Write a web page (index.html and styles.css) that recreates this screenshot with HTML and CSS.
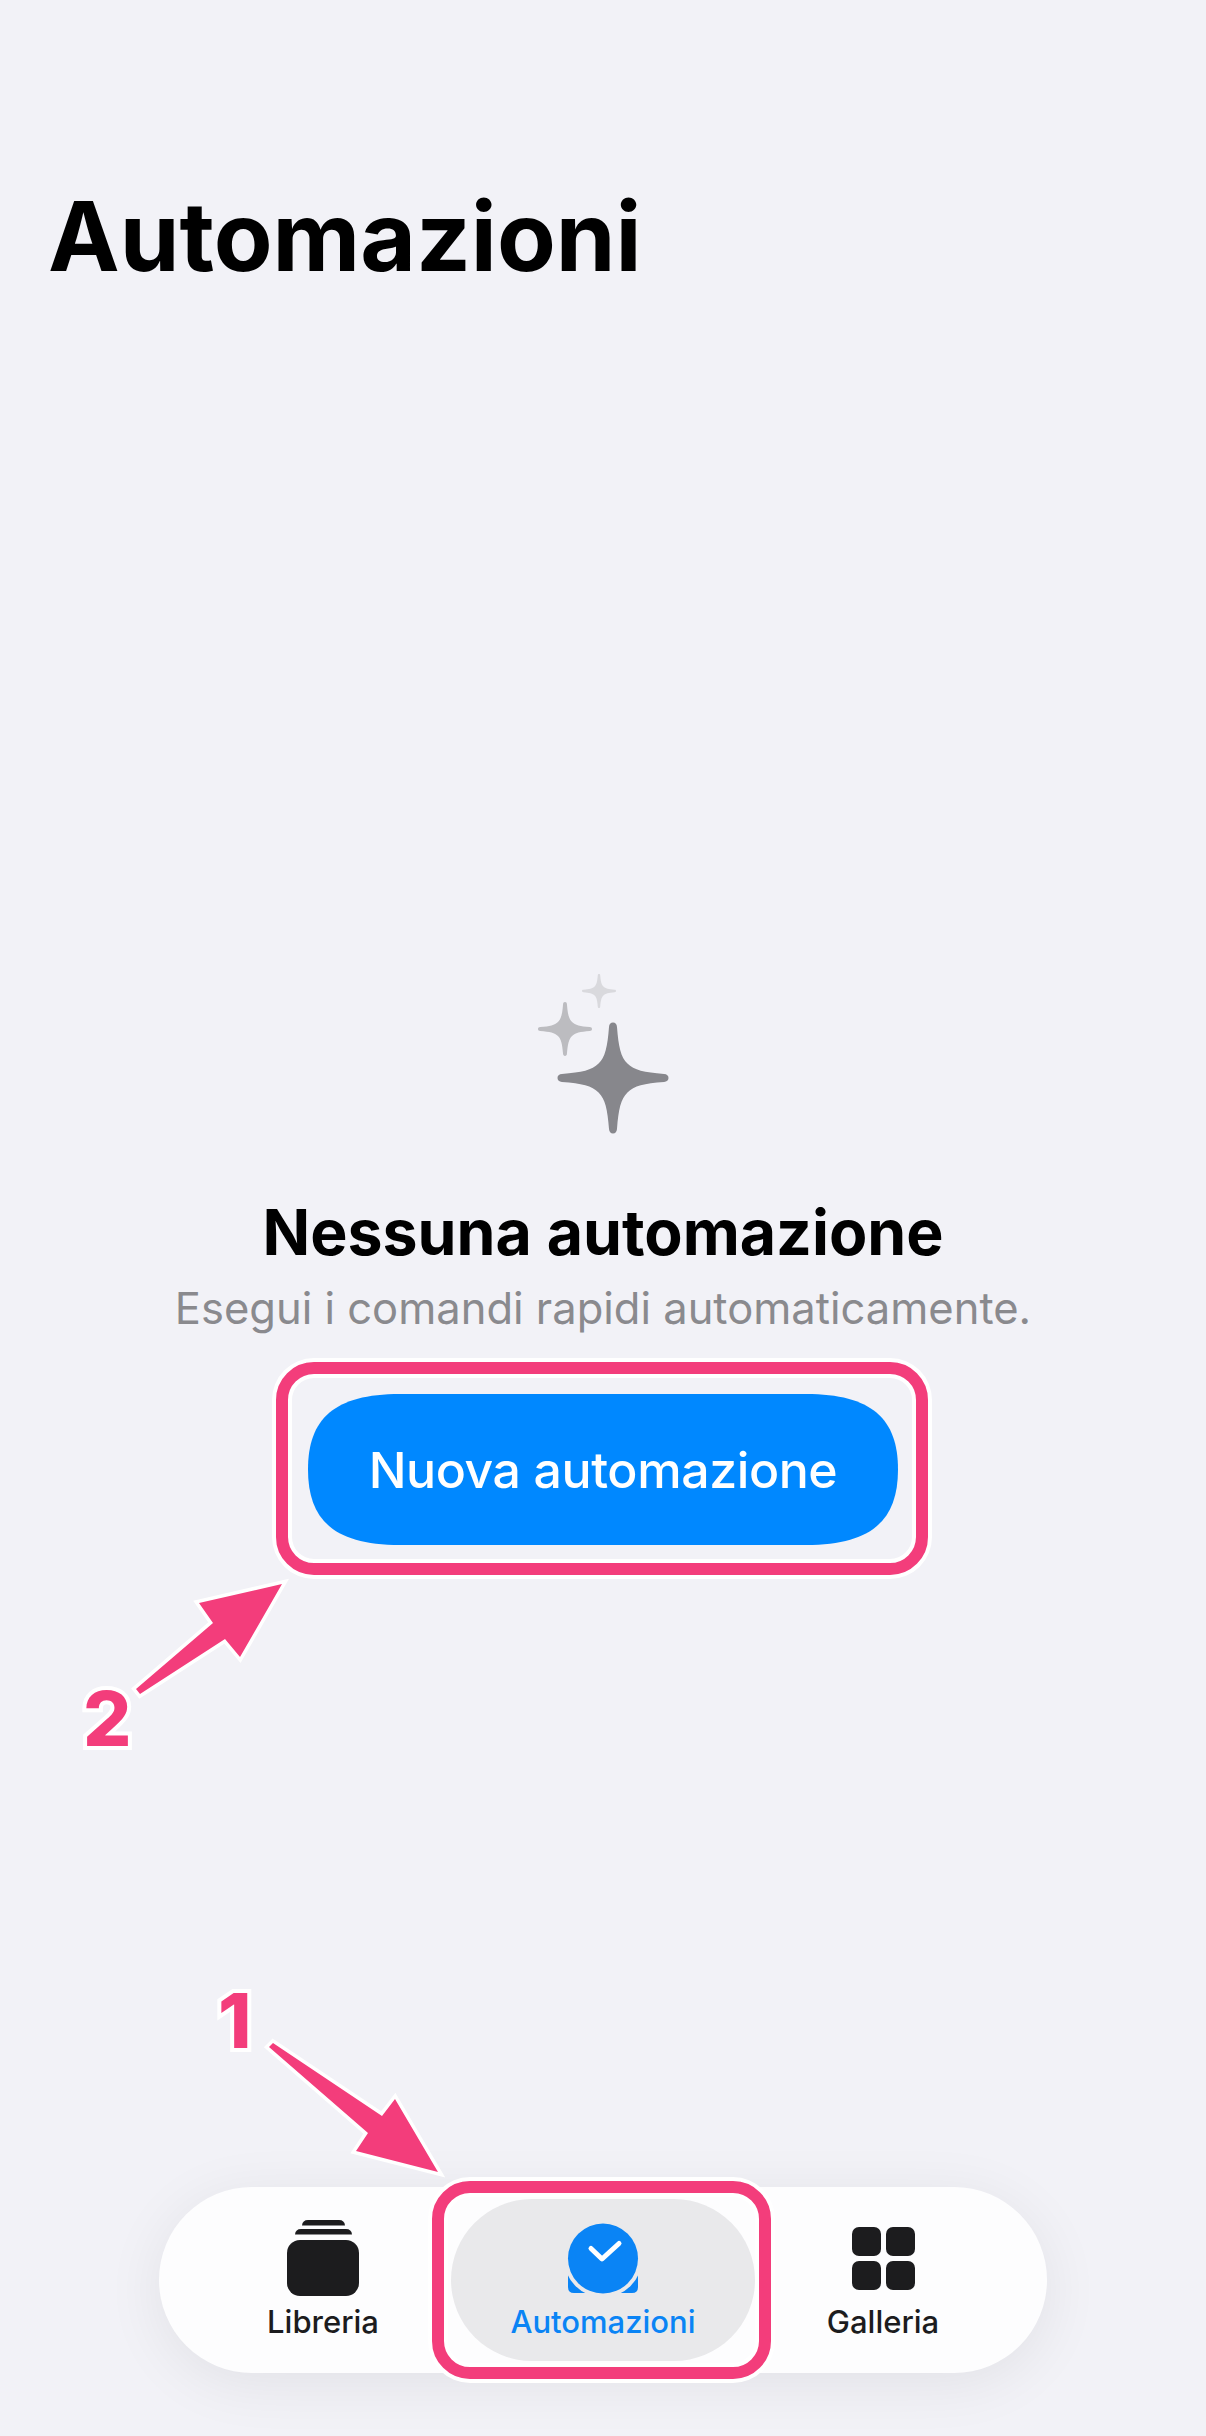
FILE: index.html
```html
<!DOCTYPE html>
<html lang="it">
<head>
  <meta charset="UTF-8">
  <meta name="viewport" content="width=device-width, initial-scale=1.0">
  <title>Automazioni</title>
  <link rel="stylesheet" href="styles.css">
</head>
<body>
  <h1 class="page-title">Automazioni</h1>

  <main class="empty-state">
    <svg class="sparkles" viewBox="0 0 140 160" aria-hidden="true">
      <defs>
        <path id="sparkle" d="M0 -50C2.2 -50 3.4 -48.5 3.6 -46C5 -28 7 -19 13 -13C19 -7 28 -5 46 -3.6C48.5 -3.4 50 -2.2 50 0C50 2.2 48.5 3.4 46 3.6C28 5 19 7 13 13C7 19 5 28 3.6 46C3.4 48.5 2.2 50 0 50C-2.2 50 -3.4 48.5 -3.6 46C-5 28 -7 19 -13 13C-19 7 -28 5 -46 3.6C-48.5 3.4 -50 2.2 -50 0C-50 -2.2 -48.5 -3.4 -46 -3.6C-28 -5 -19 -7 -13 -13C-7 -19 -5 -28 -3.6 -46C-3.4 -48.5 -2.2 -50 0 -50Z"/>
      </defs>
      <use href="#sparkle" transform="translate(66 17) scale(.34)" fill="#d9d9dd"/>
      <use href="#sparkle" transform="translate(32 55) scale(.54)" fill="#bcbcc0"/>
      <use href="#sparkle" transform="translate(80 104) scale(1.11)" fill="#87878c"/>
    </svg>
    <h2 class="empty-title">Nessuna automazione</h2>
    <p class="empty-text">Esegui i comandi rapidi automaticamente.</p>
    <button class="primary-btn">Nuova automazione</button>
  </main>

  <nav class="tab-bar">
    <a class="tab">
      <svg class="tab-icon" viewBox="0 0 72 76" aria-hidden="true">
        <path d="M15 5.500Q15.500 0 21 0H52Q57.500 0 58 5.500Z"/>
        <path d="M8 14.500Q8.500 9 14 9H59Q64.500 9 65 14.500Z"/>
        <rect x="0" y="20" width="72" height="56" rx="13"/>
      </svg>
      <span>Libreria</span>
    </a>
    <a class="tab tab-active">
      <svg class="tab-icon" viewBox="0 0 72 76" aria-hidden="true">
        <path d="M1 50V67Q1 73 7 73H65Q71 73 71 67V50Q71 46 66 46H6Q1 46 1 50Z"/>
        <circle cx="36" cy="38.500" r="39" fill="#e9e9eb"/>
        <circle cx="36" cy="38.500" r="35"/>
        <path class="tab-check" d="M24 28.500L35 39L52 23.500"/>
      </svg>
      <span>Automazioni</span>
    </a>
    <a class="tab">
      <div class="gallery-icon"><i></i><i></i><i></i><i></i></div>
      <span>Galleria</span>
    </a>
  </nav>

  <!-- callouts drawn on top of the screen -->
  <div class="callout-box callout-btn"></div>
  <div class="callout-box callout-tab"></div>
  <svg class="callout-arrows" viewBox="0 0 1206 2436" aria-hidden="true">
    <polygon points="269,2047 273,2043 382,2116 395,2099 438,2172 356,2151 368,2133"/>
    <polygon points="282,1584 199,1603 213,1623 136,1689 140,1694 225,1639 240,1657"/>
  </svg>
  <span class="callout-num num-one">1</span>
  <span class="callout-num num-two">2</span>
</body>
</html>
```

FILE: styles.css
```css
* {
  box-sizing: border-box;
}
body {
  position: relative;
  display: flex;
  flex-direction: column;
  height: 2436px;
  margin: 0;
  overflow: hidden;
  background: #f2f2f7;
  color: #000;
  font-family: Inter, "Liberation Sans", sans-serif;
}
.page-title {
  margin: 0;
  padding: 176px 48px 0;
  font-size: 96px;
  font-weight: 700;
  line-height: 120px;
}

/* empty state */
.empty-state {
  display: flex;
  flex-direction: column;
  align-items: center;
  margin-top: 678px;
}
.sparkles {
  display: block;
  width: 140px;
  height: 160px;
}
.empty-title {
  margin: 61px 0 0;
  font-size: 62.6px;
  font-weight: 700;
  line-height: 74px;
}
.empty-text {
  margin: 13px 0 0;
  color: #8a8a8e;
  font-size: 43.5px;
  line-height: 52px;
}
/* continuous-corner capsule, fixed 590x151 */
.primary-btn {
  width: 590px;
  height: 151px;
  margin-top: 60px;
  border: 0;
  background: #0088ff;
  clip-path: path("M0 75.500C0 25 26 0 92 0H498C564 0 590 25 590 75.500C590 126 564 151 498 151H92C26 151 0 126 0 75.500Z");
  color: #fff;
  font-family: inherit;
  font-size: 50px;
  font-weight: 550;
  letter-spacing: -0.4px;
}

/* tab bar */
.tab-bar {
  display: grid;
  grid-template-columns: repeat(3, 280px);
  align-self: center;
  width: 888px;
  height: 186px;
  margin-top: auto;
  margin-bottom: 63px;
  padding: 12px 24px;
  border-radius: 93px;
  background: #fdfdfe;
  box-shadow: 0 10px 60px rgba(0, 0, 0, 0.07);
}
.tab {
  display: flex;
  flex-direction: column;
  align-items: center;
  padding-top: 21px;
  color: #1c1c1e;
  font-size: 31px;
  font-weight: 500;
  line-height: 36px;
}
.tab span {
  margin-top: 8px;
}
.tab-icon {
  display: block;
  width: 72px;
  height: 76px;
  fill: currentColor;
}
.tab-active {
  margin: 0 -12px;
  border-radius: 81px;
  background: #e9e9eb;
  color: #0a84f5;
  font-weight: 550;
}
.tab-check {
  fill: none;
  stroke: #fff;
  stroke-width: 5;
  stroke-linecap: round;
  stroke-linejoin: round;
}
.gallery-icon {
  display: grid;
  grid-template-columns: 29px 29px;
  grid-auto-rows: 29px;
  gap: 5px;
  height: 76px;
  padding-top: 7px;
}
.gallery-icon i {
  border-radius: 7px;
  background: #1c1c1e;
}

/* callouts */
.callout-box {
  position: absolute;
  border: 12px solid #f33d7b;
  border-radius: 38px;
  box-shadow: 0 0 0 4px #fff, inset 0 0 0 4px #fff;
}
.callout-btn {
  left: 276px;
  top: 1362px;
  width: 652px;
  height: 213px;
}
.callout-tab {
  left: 432px;
  top: 2181px;
  width: 339px;
  height: 198px;
}
.callout-arrows {
  position: absolute;
  left: 0;
  top: 0;
  width: 1206px;
  height: 2436px;
  pointer-events: none;
}
.callout-arrows polygon {
  fill: #f33d7b;
  stroke: #fff;
  stroke-width: 7px;
  paint-order: stroke;
}
.callout-num {
  position: absolute;
  color: #f33d7b;
  font-size: 76px;
  font-weight: 800;
  line-height: 76px;
  -webkit-text-stroke: 8px #fff;
  paint-order: stroke fill;
}
.num-one {
  left: 218px;
  top: 1982px;
}
.num-two {
  left: 83px;
  top: 1680px;
}
```
